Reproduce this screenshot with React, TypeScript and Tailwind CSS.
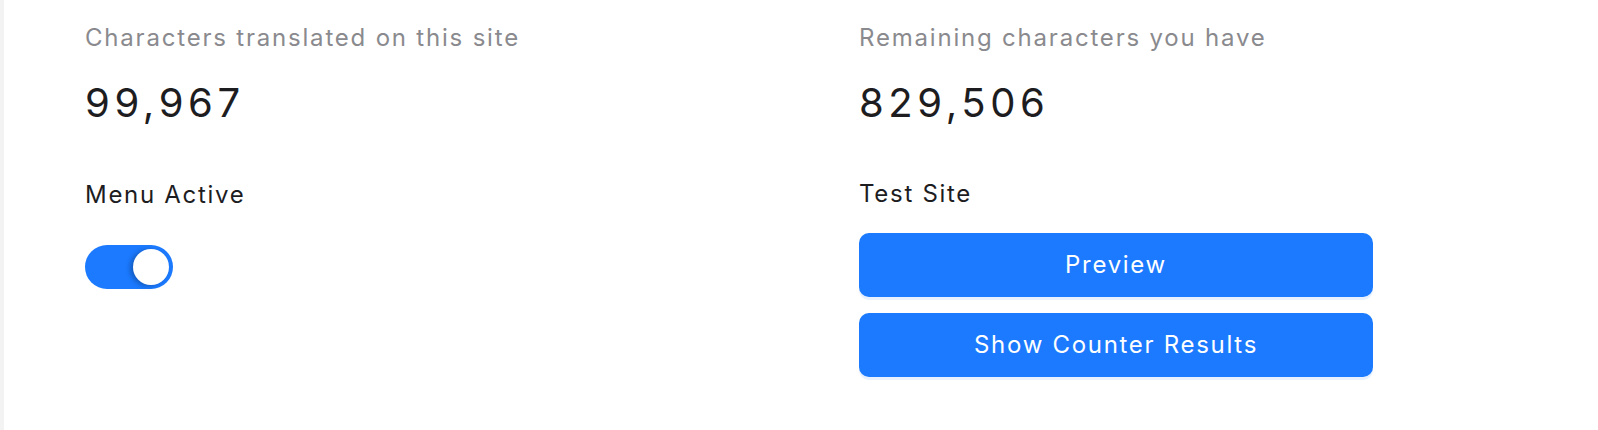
import React from "react";

export default function App() {
  return (
    <div
      className="flex h-[430px] w-[1598px] bg-white"
      style={{ fontFamily: "Inter, 'Noto Sans', sans-serif" }}
    >
      <div className="w-[4px] shrink-0 bg-[#f3f3f3]" />
      <div className="grid flex-1 grid-cols-[774px_1fr] pl-[81px] pt-[20px]">
        <div className="flex flex-col">
          <div className="text-[24px] leading-[36px] tracking-[1.8px] text-[#8a8a8e]">
            Characters translated on this site
          </div>
          <div className="mt-[23px] text-[40px] leading-[48px] tracking-[4.6px] text-[#1d1d1f]">
            99,967
          </div>
          <div className="mt-[50px] text-[24px] leading-[36px] tracking-[1.7px] text-[#1d1d1f]">
            Menu Active
          </div>
          <div className="mt-[32px] flex h-[44px] w-[88px] items-center justify-end rounded-full bg-[#1b7aff] pr-[4px]">
            <div className="h-[36px] w-[36px] rounded-full bg-white shadow-[-3px_1px_5px_rgba(0,0,0,0.25)]" />
          </div>
        </div>
        <div className="flex flex-col">
          <div className="text-[24px] leading-[36px] tracking-[1.8px] text-[#8a8a8e]">
            Remaining characters you have
          </div>
          <div className="mt-[23px] text-[40px] leading-[48px] tracking-[4.6px] text-[#1d1d1f]">
            829,506
          </div>
          <div className="mt-[49px] text-[24px] leading-[36px] tracking-[1.7px] text-[#1d1d1f]">
            Test Site
          </div>
          <div className="mt-[21px] flex w-[514px] flex-col gap-[16px]">
            <button className="h-[64px] rounded-[10px] bg-[#1b7aff] text-[24px] tracking-[1.7px] text-white shadow-[0_3px_0_#e8f1ff]">
              Preview
            </button>
            <button className="h-[64px] rounded-[10px] bg-[#1b7aff] text-[24px] tracking-[1.7px] text-white shadow-[0_3px_0_#e8f1ff]">
              Show Counter Results
            </button>
          </div>
        </div>
      </div>
    </div>
  );
}
